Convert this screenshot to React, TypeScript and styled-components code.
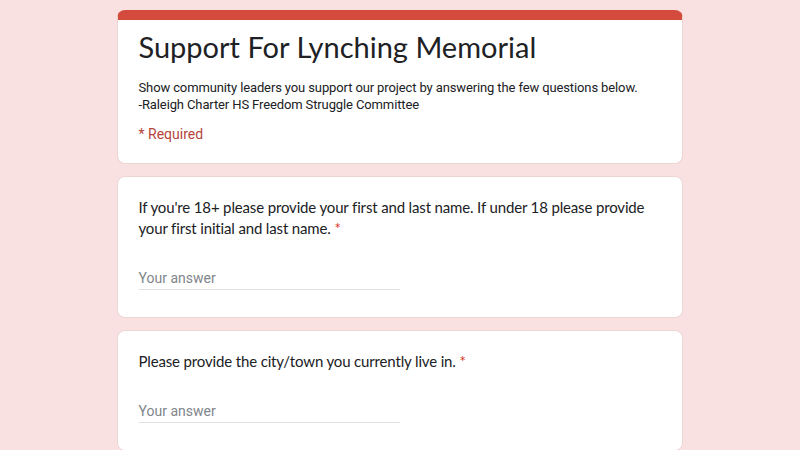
import React from "react";
import styled, { createGlobalStyle } from "styled-components";

const GlobalStyle = createGlobalStyle`
  html, body {
    margin: 0;
    padding: 0;
    background: #fae1e1;
  }
  body {
    font-family: Roboto, "Liberation Sans", sans-serif;
  }
`;

const QUESTIONS = [
  "If you're 18+ please provide your first and last name. If under 18 please provide your first initial and last name.",
  "Please provide the city/town you currently live in.",
];

export default function App() {
  return (
    <>
      <GlobalStyle />
      <Page>
        <Column>
          <HeaderCard>
            <Title>Support For Lynching Memorial</Title>
            <Description>
              Show community leaders you support our project by answering the few questions below.
              <br />
              -Raleigh Charter HS Freedom Struggle Committee
            </Description>
            <Required>* Required</Required>
          </HeaderCard>
          {QUESTIONS.map((q, idx) => (
            <QuestionCard key={idx}>
              <QuestionText>
                {q} <Star>*</Star>
              </QuestionText>
              <AnswerField>Your answer</AnswerField>
            </QuestionCard>
          ))}
        </Column>
      </Page>
    </>
  );
}

const Page = styled.div`
  display: flex;
  justify-content: center;
  padding-top: 10px;
  height: 450px;
  overflow: hidden;
  box-sizing: border-box;
`;

const Column = styled.div`
  width: 566px;
  display: flex;
  flex-direction: column;
  gap: 12px;
  margin-left: -1px;
`;

const Card = styled.div`
  background: #fff;
  border: 1px solid #ecd5d5;
  border-radius: 8px;
  box-sizing: border-box;
`;

const HeaderCard = styled(Card)`
  border-top: 10px solid #d44a3d;
  padding: 7px 24px 19px 21px;
`;

const Title = styled.h1`
  margin: 0;
  font-family: Lato, sans-serif;
  font-weight: 400;
  font-size: 29px;
  line-height: 40px;
  color: #202124;
`;

const Description = styled.p`
  margin: 12px 0 0;
  font-size: 13px;
  line-height: 17px;
  letter-spacing: -0.12px;
  color: #202124;
`;

const Required = styled.div`
  margin-top: 11px;
  font-size: 14px;
  line-height: 20px;
  color: #b5453a;
`;

const QuestionCard = styled(Card)`
  padding: 20px 24px 27px 21px;
`;

const QuestionText = styled.div`
  font-family: Lato, sans-serif;
  font-size: 15px;
  line-height: 21px;
  letter-spacing: -0.15px;
  color: #202124;
`;

const Star = styled.span`
  color: #d93025;
`;

const AnswerField = styled.div`
  margin-top: 29px;
  width: 261px;
  font-size: 14px;
  line-height: 20px;
  color: #80868b;
  padding-bottom: 1px;
  border-bottom: 1px solid #e0e0e0;
`;
